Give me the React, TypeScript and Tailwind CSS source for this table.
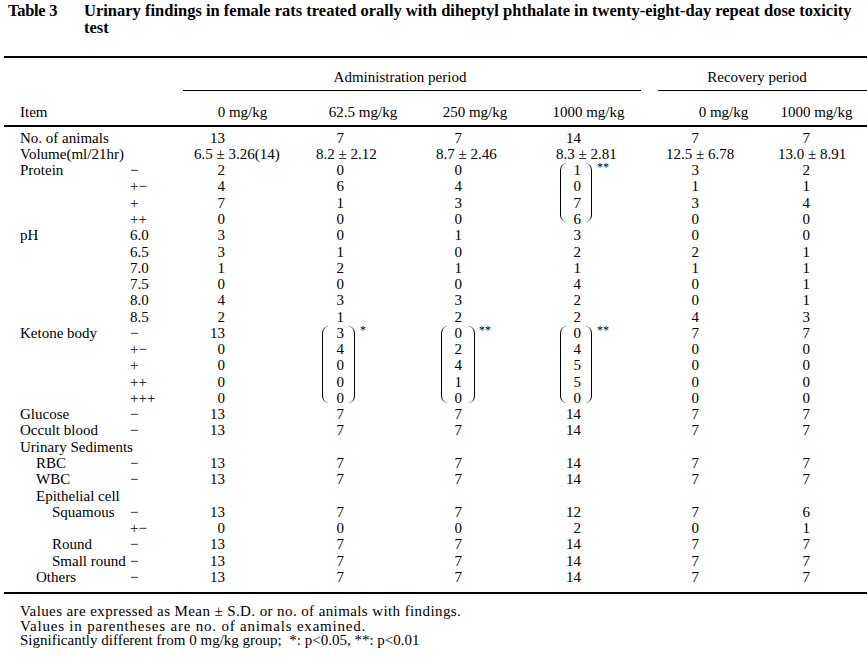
import React from "react";

type Row = {
  label?: string;
  indent?: 0 | 1 | 2;
  sub?: string;
  vals?: string[];
  vol?: string[];
};

const rows: Row[] = [
  { label: "No. of animals", vals: ["13", "7", "7", "14", "7", "7"] },
  { label: "Volume(ml/21hr)", vol: ["6.5 ± 3.26(14)", "8.2 ± 2.12", "8.7 ± 2.46", "8.3 ± 2.81", "12.5 ± 6.78", "13.0 ± 8.91"] },
  { label: "Protein", sub: "−", vals: ["2", "0", "0", "1", "3", "2"] },
  { sub: "+−", vals: ["4", "6", "4", "0", "1", "1"] },
  { sub: "+", vals: ["7", "1", "3", "7", "3", "4"] },
  { sub: "++", vals: ["0", "0", "0", "6", "0", "0"] },
  { label: "pH", sub: "6.0", vals: ["3", "0", "1", "3", "0", "0"] },
  { sub: "6.5", vals: ["3", "1", "0", "2", "2", "1"] },
  { sub: "7.0", vals: ["1", "2", "1", "1", "1", "1"] },
  { sub: "7.5", vals: ["0", "0", "0", "4", "0", "1"] },
  { sub: "8.0", vals: ["4", "3", "3", "2", "0", "1"] },
  { sub: "8.5", vals: ["2", "1", "2", "2", "4", "3"] },
  { label: "Ketone body", sub: "−", vals: ["13", "3", "0", "0", "7", "7"] },
  { sub: "+−", vals: ["0", "4", "2", "4", "0", "0"] },
  { sub: "+", vals: ["0", "0", "4", "5", "0", "0"] },
  { sub: "++", vals: ["0", "0", "1", "5", "0", "0"] },
  { sub: "+++", vals: ["0", "0", "0", "0", "0", "0"] },
  { label: "Glucose", sub: "−", vals: ["13", "7", "7", "14", "7", "7"] },
  { label: "Occult blood", sub: "−", vals: ["13", "7", "7", "14", "7", "7"] },
  { label: "Urinary Sediments" },
  { label: "RBC", indent: 1, sub: "−", vals: ["13", "7", "7", "14", "7", "7"] },
  { label: "WBC", indent: 1, sub: "−", vals: ["13", "7", "7", "14", "7", "7"] },
  { label: "Epithelial cell", indent: 1 },
  { label: "Squamous", indent: 2, sub: "−", vals: ["13", "7", "7", "12", "7", "6"] },
  { sub: "+−", vals: ["0", "0", "0", "2", "0", "1"] },
  { label: "Round", indent: 2, sub: "−", vals: ["13", "7", "7", "14", "7", "7"] },
  { label: "Small round", indent: 2, sub: "−", vals: ["13", "7", "7", "14", "7", "7"] },
  { label: "Others", indent: 1, sub: "−", vals: ["13", "7", "7", "14", "7", "7"] },
];

const brackets: Record<number, Record<number, { span: number; star: string }>> = {
  2: { 3: { span: 4, star: "**" } },
  12: { 1: { span: 5, star: "*" }, 2: { span: 5, star: "**" }, 3: { span: 5, star: "**" } },
};

const numCls = ["pr-[75px]", "pr-[76px]", "pr-[68px]", "pr-[64px]", "pr-[61px]", "pr-[57px]"];
const volCls = ["pl-[9px]", "pl-[16px]", "pl-[16px]", "pl-[26px]", "pl-[21px]", "pl-[18px]"];
const brCls = ["", "left-[22px] w-[33px]", "left-[21px] w-[34px]", "left-[30px] w-[32px]", "", ""];
const starCls = ["", "left-[60px]", "left-[59px]", "left-[67px]", "", ""];
const brH: Record<number, string> = { 4: "h-[59px]", 5: "h-[77px]" };
const indentCls = ["pl-[20px]", "pl-[36px]", "pl-[52px]"];

const GRID = "grid grid-cols-[130px_55px_115px_120px_110px_115px_115px_107px]";

export default function App() {
  return (
    <div className="w-[867px] h-[659px] bg-white text-black overflow-hidden font-['Liberation_Serif',serif] text-[15px]">
      {/* Title */}
      <div className="flex pt-[2px] pl-[8px] font-bold text-[16.5px] leading-[17px]">
        <div className="w-[76px] shrink-0 tracking-[-0.3px]">Table 3</div>
        <div className="w-[780px]">
          Urinary findings in female rats treated orally with diheptyl phthalate in twenty-eight-day repeat dose toxicity test
        </div>
      </div>

      {/* Top rule */}
      <div className="mt-[20px] ml-[4px] h-[2px] bg-black" />

      {/* Header */}
      <div className={`${GRID} mt-[11px] leading-[16.33px]`}>
        <div className="col-span-2" />
        <div className="col-span-4 flex flex-col">
          <div className="text-center pr-[30px]">Administration period</div>
          <div className="mt-[5px] h-px bg-black ml-[-2px] mr-[4px]" />
        </div>
        <div className="col-span-2 flex flex-col">
          <div className="text-center pl-[2px]">Recovery period</div>
          <div className="mt-[5px] h-px bg-black ml-[13px]" />
        </div>
      </div>
      <div className={`${GRID} mt-[13px] leading-[16.33px]`}>
        <div className="col-span-2 pl-[20px]">Item</div>
        <div className="text-center">0 mg/kg</div>
        <div className="text-center pl-[6px]">62.5 mg/kg</div>
        <div className="text-center">250 mg/kg</div>
        <div className="text-center pl-[2px]">1000 mg/kg</div>
        <div className="text-center pl-[42px]">0 mg/kg</div>
        <div className="text-center pl-[6px]">1000 mg/kg</div>
      </div>
      <div className="mt-[4px] ml-[4px] h-[2px] bg-black" />

      {/* Body */}
      <div className="pt-[3px]">
        {rows.map((r, i) => (
          <div key={i} className={`${GRID} h-[16.27px] leading-[16.27px] whitespace-nowrap`}>
            <div className={`${indentCls[r.indent ?? 0]} ${r.vol ? "col-span-2" : ""}`}>{r.label ?? ""}</div>
            {!r.vol && <div>{r.sub ?? ""}</div>}
            {[0, 1, 2, 3, 4, 5].map((c) => {
              const b = brackets[i]?.[c];
              if (r.vol) {
                return (
                  <div key={c} className={volCls[c]}>
                    {r.vol[c]}
                  </div>
                );
              }
              return (
                <div key={c} className={`relative text-right ${numCls[c]}`}>
                  {r.vals ? r.vals[c] : ""}
                  {b && (
                    <>
                      <div
                        className={`absolute top-[1px] ${brCls[c]} ${brH[b.span]} border-x border-black rounded-[7px]`}
                      />
                      <div className={`absolute top-[-2px] ${starCls[c]} text-[12px] leading-[14px]`}>{b.star}</div>
                    </>
                  )}
                </div>
              );
            })}
          </div>
        ))}
      </div>

      {/* Bottom rule */}
      <div className="mt-[7px] ml-[4px] h-[2px] bg-black" />

      {/* Footnotes */}
      <div className="mt-[10px] pl-[20px] leading-[14.5px] tracking-[0.4px]">
        <div>Values are expressed as Mean ± S.D. or no. of animals with findings.</div>
        <div className="tracking-[0.8px]">Values in parentheses are no. of animals examined.</div>
        <div className="tracking-[0px]">Significantly different from 0 mg/kg group;&nbsp; *: p&lt;0.05, **: p&lt;0.01</div>
      </div>
    </div>
  );
}
